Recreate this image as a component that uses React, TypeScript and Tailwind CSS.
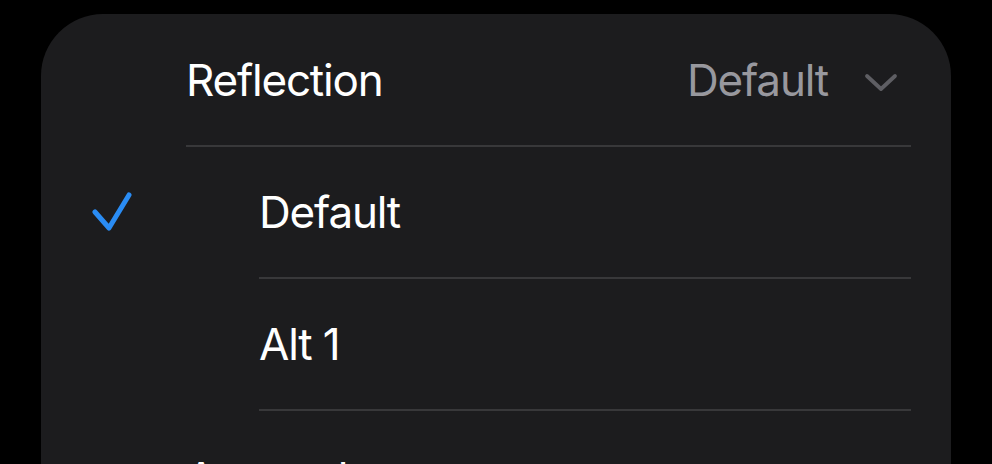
import React from "react";

const font = { fontFamily: "Inter, 'Noto Sans', sans-serif" };

function Check() {
  return (
    <svg width="44" height="44" viewBox="0 0 44 44" fill="none">
      <path
        d="M3 21 L17 37 L37 4"
        stroke="#2a8cf4"
        strokeWidth="5"
        strokeLinecap="round"
        strokeLinejoin="round"
      />
    </svg>
  );
}

function Chevron() {
  return (
    <svg width="36" height="22" viewBox="0 0 36 22" fill="none">
      <path
        d="M4 4 L18 17 L32 4"
        stroke="#5e5e63"
        strokeWidth="3.8"
        strokeLinecap="round"
        strokeLinejoin="round"
      />
    </svg>
  );
}

function OptionRow({ label, selected }: { label: string; selected?: boolean }) {
  return (
    <div className="flex h-[132px]">
      <div className="w-[218px] flex items-center pl-[51px]">{selected && <Check />}</div>
      <div className="flex-1 mr-[40px] flex items-center border-b-2 border-[#38383a]">
        <span className="text-[44px] text-white leading-none tracking-[-1.2px]">{label}</span>
      </div>
    </div>
  );
}

export default function App() {
  return (
    <div className="w-[992px] h-[464px] bg-black overflow-hidden pt-[14px] pl-[41px]" style={font}>
      <div className="w-[910px] h-[600px] bg-[#1c1c1e] rounded-t-[62px]">
        {/* Header row */}
        <div className="ml-[145px] mr-[40px] h-[133px] flex items-center border-b-2 border-[#38383a]">
          <span className="flex-1 text-[44px] text-white leading-none tracking-[-1.2px]">Reflection</span>
          <span className="text-[44px] text-[#98989e] leading-none tracking-[-1.2px]">Default</span>
          <div className="ml-[35px] mr-[12px] pt-[6px]">
            <Chevron />
          </div>
        </div>

        <OptionRow label="Default" selected />
        <OptionRow label="Alt 1" />

        <div className="ml-[145px] mr-[40px] h-[133px] flex items-center">
          <span className="text-[44px] text-white leading-none tracking-[-1.2px]">Atmosphere</span>
        </div>
      </div>
    </div>
  );
}
